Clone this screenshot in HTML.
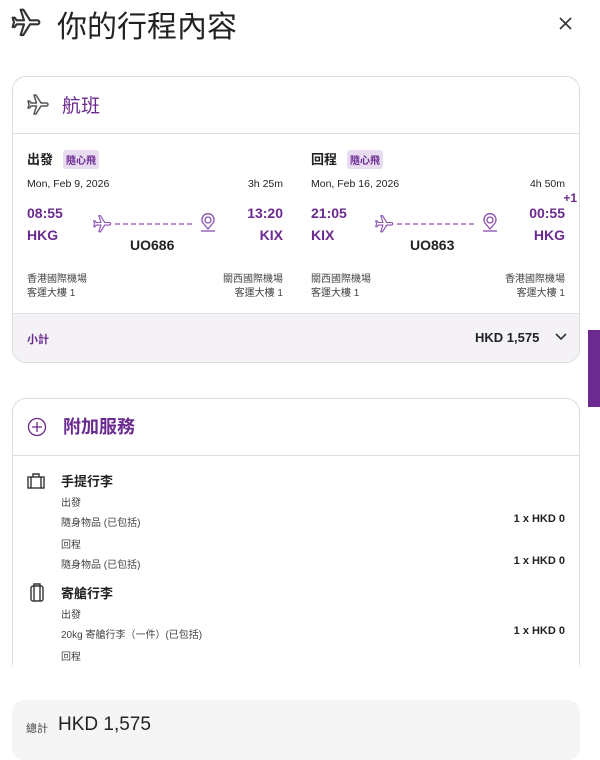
<!DOCTYPE html><html><head><meta charset="utf-8"><style>
*{margin:0;padding:0;box-sizing:border-box}
body{width:600px;height:747px;overflow:hidden;background:#fff;font-family:"Liberation Sans","Noto Sans CJK TC",sans-serif;color:#222;position:relative}
.a{position:absolute;white-space:nowrap}
.p{color:#6b2a8f}
.b{font-weight:bold}
.card{position:absolute;left:12px;width:568px;border:1px solid #ddd;border-radius:14px;background:#fff;overflow:hidden}
.tag{background:#e7dcf0;color:#6b2a8f;font-size:10px;padding:2px 3px;border-radius:3px;font-weight:bold}
.r{text-align:right}
.s{font-size:10.5px}
</style></head><body>
<svg class="a" style="left:10px;top:7px" width="32" height="32" viewBox="0 0 24 24" fill="none" stroke="#333" stroke-width="1.6" stroke-linejoin="round"><g transform="rotate(90 12 12)"><path d="M21 16v-2l-8-5V3.5c0-.83-.67-1.5-1.5-1.5S10 2.67 10 3.5V9l-8 5v2l8-2.5V19l-2 1.5V22l3.5-1 3.5 1v-1.5L13 19v-5.5l8 2.5z"/></g></svg>
<div class="a" style="left:57px;top:2px;font-size:30px;color:#222">你的行程內容</div>
<svg class="a" style="left:559px;top:17px" width="13" height="13" stroke="#333" stroke-width="1.6"><path d="M1 1l11 11M12 1L1 12"/></svg>

<div class="card" style="top:76px;height:287px">
<div class="a" style="left:0;top:56px;width:568px;border-top:1px solid #ddd"></div>
<svg class="a" style="left:13px;top:16px" width="24" height="24" viewBox="0 0 24 24" fill="none" stroke="#555" stroke-width="1.5" stroke-linejoin="round"><g transform="rotate(90 12 12)"><path d="M21 16v-2l-8-5V3.5c0-.83-.67-1.5-1.5-1.5S10 2.67 10 3.5V9l-8 5v2l8-2.5V19l-2 1.5V22l3.5-1 3.5 1v-1.5L13 19v-5.5l8 2.5z"/></g></svg>
<div class="a p" style="left:49px;top:14px;font-size:19px">航班</div>

<div class="a b" style="left:14px;top:72px;font-size:13px">出發</div><div class="a tag" style="left:50px;top:73px">隨心飛</div>
<div class="a s" style="left:14px;top:101px">Mon, Feb 9, 2026</div>
<div class="a r s" style="left:200px;width:70px;top:101px">3h 25m</div>
<div class="a p b" style="left:14px;top:128px;font-size:14px">08:55</div>
<div class="a p b" style="left:14px;top:150px;font-size:14px">HKG</div>
<div class="a p b r" style="left:200px;width:70px;top:128px;font-size:14px">13:20</div>
<div class="a p b r" style="left:200px;width:70px;top:150px;font-size:14px">KIX</div>
<svg class="a" style="left:78px;top:134px" width="130" height="26" fill="none" stroke="#8a4fb0" stroke-width="1.3" stroke-linejoin="round"><g transform="translate(1,3) scale(0.85) rotate(90 12 12)"><path d="M21 16v-2l-8-5V3.5c0-.83-.67-1.5-1.5-1.5S10 2.67 10 3.5V9l-8 5v2l8-2.5V19l-2 1.5V22l3.5-1 3.5 1v-1.5L13 19v-5.5l8 2.5z"/></g><path d="M24 13h80" stroke-dasharray="5 3"/><circle cx="117" cy="9" r="3"/><path d="M117 18l-5-6a6 6 0 1 1 10 0z"/><path d="M110 20h14"/></svg>
<div class="a b" style="left:117px;top:160px;font-size:14px">UO686</div>
<div class="a" style="left:14px;top:193px;font-size:10px;color:#444">香港國際機場</div>
<div class="a" style="left:14px;top:207px;font-size:10px;color:#444">客運大樓 1</div>
<div class="a r" style="left:170px;width:100px;top:193px;font-size:10px;color:#444">關西國際機場</div>
<div class="a r" style="left:170px;width:100px;top:207px;font-size:10px;color:#444">客運大樓 1</div>

<div class="a b" style="left:298px;top:72px;font-size:13px">回程</div><div class="a tag" style="left:334px;top:73px">隨心飛</div>
<div class="a s" style="left:298px;top:101px">Mon, Feb 16, 2026</div>
<div class="a r s" style="left:482px;width:70px;top:101px">4h 50m</div>
<div class="a p b r" style="left:482px;width:82px;top:114px;font-size:12px">+1</div>
<div class="a p b" style="left:298px;top:128px;font-size:14px">21:05</div>
<div class="a p b" style="left:298px;top:150px;font-size:14px">KIX</div>
<div class="a p b r" style="left:482px;width:70px;top:128px;font-size:14px">00:55</div>
<div class="a p b r" style="left:482px;width:70px;top:150px;font-size:14px">HKG</div>
<svg class="a" style="left:360px;top:134px" width="130" height="26" fill="none" stroke="#8a4fb0" stroke-width="1.3" stroke-linejoin="round"><g transform="translate(1,3) scale(0.85) rotate(90 12 12)"><path d="M21 16v-2l-8-5V3.5c0-.83-.67-1.5-1.5-1.5S10 2.67 10 3.5V9l-8 5v2l8-2.5V19l-2 1.5V22l3.5-1 3.5 1v-1.5L13 19v-5.5l8 2.5z"/></g><path d="M24 13h80" stroke-dasharray="5 3"/><circle cx="117" cy="9" r="3"/><path d="M117 18l-5-6a6 6 0 1 1 10 0z"/><path d="M110 20h14"/></svg>
<div class="a b" style="left:397px;top:160px;font-size:14px">UO863</div>
<div class="a" style="left:298px;top:193px;font-size:10px;color:#444">關西國際機場</div>
<div class="a" style="left:298px;top:207px;font-size:10px;color:#444">客運大樓 1</div>
<div class="a r" style="left:452px;width:100px;top:193px;font-size:10px;color:#444">香港國際機場</div>
<div class="a r" style="left:452px;width:100px;top:207px;font-size:10px;color:#444">客運大樓 1</div>

<div class="a" style="left:0;top:236px;width:568px;height:52px;background:#f4f2f7;border-top:1px solid #e2e2e2"></div>
<div class="a p b" style="left:14px;top:254px;font-size:11px">小計</div>
<div class="a b" style="left:462px;top:253px;font-size:13px">HKD 1,575</div>
<svg class="a" style="left:541px;top:255px" width="14" height="10" fill="none" stroke="#333" stroke-width="1.6"><path d="M2 2l5 5 5-5"/></svg>
</div>

<div class="a" style="left:588px;top:330px;width:12px;height:77px;background:#6b2a8f"></div>

<div class="card" style="top:398px;height:300px;border-bottom:none;border-radius:14px 14px 0 0">
<div class="a" style="left:0;top:56px;width:568px;border-top:1px solid #ddd"></div>
<svg class="a" style="left:14px;top:18px" width="20" height="20" fill="none" stroke="#6b2a8f" stroke-width="1.3"><circle cx="10" cy="10" r="8.5"/><path d="M10 5v10M5 10h10"/></svg>
<div class="a p b" style="left:50px;top:14px;font-size:18px">附加服務</div>
<svg class="a" style="left:14px;top:74px" width="18" height="16" fill="none" stroke="#333" stroke-width="1.4"><rect x="1" y="4" width="16" height="11"/><path d="M6 4V1h6v3M4 4v11M14 4v11"/></svg>
<div class="a b" style="left:48px;top:72px;font-size:13px">手提行李</div>
<div class="a" style="left:48px;top:95px;font-size:10px;color:#444">出發</div>
<div class="a" style="left:48px;top:115px;font-size:10px;color:#444">隨身物品 (已包括)</div>
<div class="a b r" style="left:452px;width:100px;top:114px;font-size:11px">1 x HKD 0</div>
<div class="a" style="left:48px;top:137px;font-size:10px;color:#444">回程</div>
<div class="a" style="left:48px;top:157px;font-size:10px;color:#444">隨身物品 (已包括)</div>
<div class="a b r" style="left:452px;width:100px;top:156px;font-size:11px">1 x HKD 0</div>
<svg class="a" style="left:16px;top:184px" width="16" height="20" fill="none" stroke="#333" stroke-width="1.4"><rect x="2" y="3" width="12" height="15" rx="2"/><path d="M5 3V1h6v2M5 3v15M11 3v15"/></svg>
<div class="a b" style="left:48px;top:184px;font-size:13px">寄艙行李</div>
<div class="a" style="left:48px;top:207px;font-size:10px;color:#444">出發</div>
<div class="a" style="left:48px;top:227px;font-size:10px;color:#444">20kg 寄艙行李（一件）(已包括)</div>
<div class="a b r" style="left:452px;width:100px;top:226px;font-size:11px">1 x HKD 0</div>
<div class="a" style="left:48px;top:249px;font-size:10px;color:#444">回程</div>
</div>
<div class="a" style="left:0;top:665px;width:600px;height:35px;background:#fff"></div>

<div class="a" style="left:12px;top:700px;width:568px;height:60px;background:#f5f5f5;border-radius:12px"></div>
<div class="a" style="left:26px;top:720px;font-size:11px;color:#444">總計</div>
<div class="a" style="left:58px;top:714px;font-size:19px;color:#222">HKD 1,575</div>
</body></html>
